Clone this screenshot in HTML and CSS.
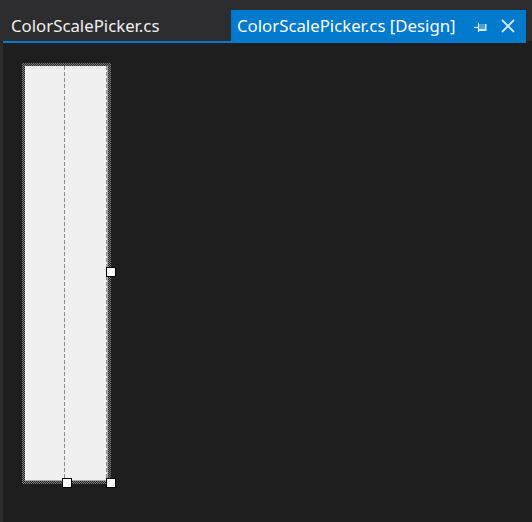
FILE: index.html
```html
<!DOCTYPE html>
<html>
<head>
<meta charset="utf-8">
<link rel="stylesheet" href="styles.css">
</head>
<body>
<div class="ide">
  <div class="tabstrip">
    <div class="tab">ColorScalePicker.cs</div>
    <div class="tab active">
      <span class="tab-title">ColorScalePicker.cs [Design]</span>
      <svg class="pin" width="13" height="11" viewBox="0 0 13 11">
        <line x1="0" y1="5.5" x2="4" y2="5.5" stroke="#d6ebf8" stroke-width="1.2"/>
        <line x1="4.5" y1="1" x2="4.5" y2="10" stroke="#d6ebf8" stroke-width="1.2"/>
        <rect x="5" y="2" width="7.5" height="7" fill="#d6ebf8"/>
        <rect x="5" y="2" width="6" height="5" fill="#4f9fd8"/>
      </svg>
      <svg class="close" width="14" height="14" viewBox="0 0 14 14">
        <path d="M1 1 L13 13 M13 1 L1 13" stroke="#d6ebf8" stroke-width="1.8" fill="none"/>
      </svg>
    </div>
  </div>
  <div class="accent"></div>
  <div class="surface">
    <div class="control">
      <div class="panel">
        <div class="guide guide-mid"></div>
        <div class="guide guide-right"></div>
      </div>
      <div class="handle h-right"></div>
      <div class="handle h-bottom"></div>
      <div class="handle h-corner"></div>
    </div>
  </div>
</div>
</body>
</html>
```
FILE: styles.css
```css
html, body {
  margin: 0;
  padding: 0;
  background: #1e1e1e;
  width: 532px;
  height: 522px;
  overflow: hidden;
}
.ide {
  display: flex;
  flex-direction: column;
  height: 522px;
  font-family: "Noto Sans", "Open Sans", sans-serif;
}
.tabstrip {
  display: flex;
  align-items: flex-end;
  height: 41px;
  background: #2d2d30;
}
.tab {
  height: 31px;
  box-sizing: border-box;
  color: #f1f1f1;
  font-size: 16.8px;
  line-height: 32px;
  white-space: nowrap;
}
.tab:first-child {
  width: 231px;
  padding-left: 11px;
}
.tab.active {
  width: 295px;
  background: #007acc;
  color: #ffffff;
  padding-left: 6px;
  display: flex;
  align-items: center;
}
.tab-title {
  flex: none;
}
.pin {
  margin-left: 18px;
  margin-top: 3px;
}
.close {
  margin-left: 14px;
  margin-top: 1px;
}
.accent {
  height: 2px;
  width: 523px;
  margin-left: 3px;
  background: #007acc;
}
.surface {
  flex: 1;
  border-left: 3px solid #2d2d30;
  padding: 20px 0 0 19px;
}
.control {
  position: relative;
  width: 89px;
  height: 421px;
  box-sizing: border-box;
  padding: 3px;
  background: repeating-conic-gradient(#7c7c7c 0 25%, #262626 0 50%) 0 0 / 2px 2px;
}
.panel {
  position: relative;
  width: 83px;
  height: 415px;
  box-sizing: border-box;
  background: #f0f0f0;
  border-right: 1px solid #a8a8a8;
  border-bottom: 1px solid #a8a8a8;
}
.guide {
  position: absolute;
  top: 0;
  bottom: 0;
  width: 1px;
  background: repeating-linear-gradient(to bottom, #8a8a8a 0 4px, transparent 4px 6px);
}
.guide-mid { left: 39px; }
.guide-right { left: 81px; }
.handle {
  position: absolute;
  width: 10px;
  height: 10px;
  box-sizing: border-box;
  background: #ffffff;
  border: 1px solid #000000;
}
.h-right { left: 84px; top: 204px; }
.h-bottom { left: 40px; top: 415px; }
.h-corner { left: 84px; top: 415px; }
```
